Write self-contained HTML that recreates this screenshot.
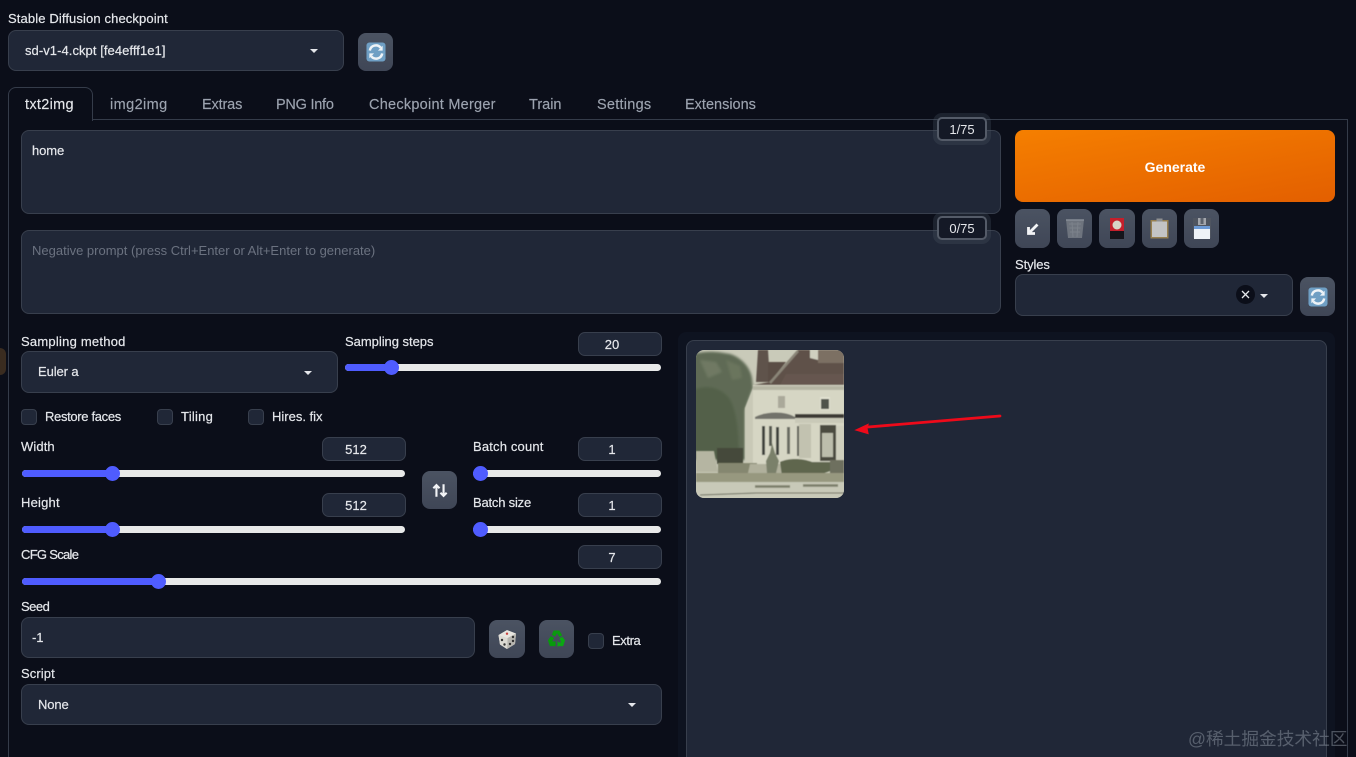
<!DOCTYPE html>
<html lang="en">
<head>
<meta charset="utf-8">
<title>Stable Diffusion</title>
<style>
*{box-sizing:border-box}
html,body{margin:0;padding:0;width:1356px;height:757px;overflow:hidden;background:#0b0e19}
#w{position:relative;width:1356px;height:757px;overflow:hidden;background:#0b0e19;font-family:"Liberation Sans","Noto Sans CJK SC",sans-serif;font-size:13px;color:#e5e7eb}
.a{position:absolute}
.t{position:absolute;white-space:nowrap;line-height:18px;height:18px;color:#e5e7eb;letter-spacing:-.1px;font-size:13px;-webkit-text-stroke:.2px currentColor}
.box{position:absolute;background:#202737;border:1px solid #383f4d;border-radius:8px}
.num{position:absolute;background:#202737;border:1px solid #383f4d;border-radius:7px;width:84px;height:24px;line-height:24px;text-align:center;padding-right:16px;font-size:13px;color:#e5e7eb;-webkit-text-stroke:.2px currentColor}
.btn{position:absolute;background:linear-gradient(#4b5362,#3f4656);border-radius:8px;display:flex;align-items:center;justify-content:center}
.cb{position:absolute;width:16px;height:16px;background:#202737;border:1px solid #383f4d;border-radius:4px}
.caret{position:absolute;width:0;height:0;border-left:4px solid transparent;border-right:4px solid transparent;border-top:4px solid #e5e7eb}
.track{position:absolute;height:7.5px;border-radius:4px;background:#e8e9e9}
.fill{position:absolute;left:0;top:0;height:7.5px;border-radius:4px;background:#4f5cff}
.thumb{position:absolute;width:15px;height:15px;border-radius:50%;background:#4f5cff;top:-3.75px}
.tab{position:absolute;top:96px;color:#9ca3af;font-size:14.5px;line-height:18px;white-space:nowrap;-webkit-text-stroke:.15px currentColor}
.cnt{position:absolute;width:50px;height:24px;background:#141926;border:2px solid #545b68;border-radius:5px;box-shadow:0 0 0 4px rgba(75,85,99,.28);text-align:center;line-height:21px;font-size:13px;color:#e5e7eb}
</style>
</head>
<body>
<div id="w">
<div class="a" style="left:0;top:348px;width:6px;height:27px;background:#3a2c20;border-radius:0 6px 6px 0"></div>

<div class="t" style="left:8px;top:10px;letter-spacing:.12px">Stable Diffusion checkpoint</div>
<div class="box" style="left:8px;top:30px;width:336px;height:41px"></div>
<div class="t" style="left:25px;top:42px;letter-spacing:.06px">sd-v1-4.ckpt [fe4efff1e1]</div>
<div class="caret" style="left:310px;top:49px"></div>
<div class="btn" style="left:358px;top:33px;width:35px;height:38px">
<svg width="20" height="20" viewBox="0 0 21 21"><rect width="20" height="20" x=".5" y=".5" rx="3" fill="#6f9fc4"/><path d="M4 9a6.5 6.5 0 0 1 11.5-3" fill="none" stroke="#eef3f7" stroke-width="2.6"/><path d="M17 12a6.5 6.5 0 0 1-11.5 3" fill="none" stroke="#eef3f7" stroke-width="2.6"/><path d="M17.5 4v5H12.500zM3.500 17v-5H8.500z" fill="#eef3f7"/></svg>
</div>

<!-- tabs -->
<div class="a" style="left:8px;top:119px;width:1340px;height:660px;border:1px solid #353c4a"></div>
<div class="a" style="left:8px;top:87px;width:85px;height:34px;background:#0b0e19;border:1px solid #353c4a;border-bottom:none;border-radius:8px 8px 0 0"></div>
<div class="tab" style="left:25px;color:#e5e7eb;letter-spacing:.3px">txt2img</div>
<div class="tab" style="left:110px;letter-spacing:.4px">img2img</div>
<div class="tab" style="left:202px;letter-spacing:-.15px">Extras</div>
<div class="tab" style="left:276px;letter-spacing:-.25px">PNG Info</div>
<div class="tab" style="left:369px;letter-spacing:.25px">Checkpoint Merger</div>
<div class="tab" style="left:529px">Train</div>
<div class="tab" style="left:597px;letter-spacing:.25px">Settings</div>
<div class="tab" style="left:685px">Extensions</div>

<!-- prompts -->
<div class="box" style="left:21px;top:130px;width:980px;height:84px"></div>
<div class="t" style="left:32px;top:142px">home</div>
<div class="cnt" style="left:937px;top:117px">1/75</div>
<div class="box" style="left:21px;top:230px;width:980px;height:84px"></div>
<div class="t" style="left:32px;top:242px;color:#6b7280;letter-spacing:0;-webkit-text-stroke:0">Negative prompt (press Ctrl+Enter or Alt+Enter to generate)</div>
<div class="cnt" style="left:937px;top:216px">0/75</div>

<!-- generate -->
<div class="a" style="left:1015px;top:130px;width:320px;height:72px;border-radius:8px;background:linear-gradient(170deg,#f57f00,#e35f00);color:#fff;font-weight:bold;font-size:14px;line-height:75px;text-align:center">Generate</div>
<div class="btn" style="left:1015px;top:209px;width:35px;height:39px">
<svg width="16" height="16" viewBox="0 0 16 16"><path d="M12.500 3.500 5 11M3.500 6v6.500H10" fill="none" stroke="#f3f4f6" stroke-width="2.800"/></svg>
</div>
<div class="btn" style="left:1057px;top:209px;width:35px;height:39px">
<svg width="20" height="21" viewBox="0 0 20 21"><path d="M1 1.500h18l-2 18.500H3z" fill="#6e747e"/><path d="M1 2h18" stroke="#868c95" stroke-width="1.500"/><path d="M4 6h12M4.500 10h11M5 14h10M7 4l1 15M13 4l-1 15" stroke="#7c828b" stroke-width="1"/></svg>
</div>
<div class="btn" style="left:1099px;top:209px;width:36px;height:39px">
<svg width="14" height="21" viewBox="0 0 14 21"><rect width="14" height="13" fill="#c41f2b"/><rect width="14" height="8" y="13" fill="#15151b"/><circle cx="7" cy="7" r="4.500" fill="#d8d3c6"/></svg>
</div>
<div class="btn" style="left:1142px;top:209px;width:35px;height:39px">
<svg width="19" height="21" viewBox="0 0 19 21"><rect width="18" height="18.500" x=".5" y="2" fill="#97804f"/><rect width="15" height="15.500" x="2" y="3.500" fill="#c3c4c4"/><rect width="6" height="3" x="6.500" y=".5" fill="#8e8f90"/></svg>
</div>
<div class="btn" style="left:1184px;top:209px;width:35px;height:39px">
<svg width="20" height="21" viewBox="0 0 20 21"><rect width="18" height="20" x="1" fill="#4f5560"/><rect width="8" height="7" x="6" fill="#a3a6ac"/><rect width="3" height="6" x="8.500" fill="#5c626c"/><rect width="16" height="13" x="2" y="8" fill="#eef2f7"/><rect width="16" height="3" x="2" y="8" fill="#6c9ad6"/></svg>
</div>
<div class="t" style="left:1015px;top:256px">Styles</div>
<div class="box" style="left:1015px;top:274px;width:278px;height:42px"></div>
<div class="a" style="left:1236px;top:285px;width:19px;height:19px;border-radius:50%;background:#0b0e19"></div>
<svg class="a" style="left:1241px;top:290px" width="9" height="9" viewBox="0 0 9 9"><path d="M1 1l7 7M8 1 1 8" stroke="#e5e7eb" stroke-width="1.300"/></svg>
<div class="caret" style="left:1260px;top:294px"></div>
<div class="btn" style="left:1300px;top:277px;width:35px;height:39px">
<svg width="20" height="20" viewBox="0 0 21 21"><rect width="20" height="20" x=".5" y=".5" rx="3" fill="#6f9fc4"/><path d="M4 9a6.500 6.500 0 0 1 11.500-3" fill="none" stroke="#eef3f7" stroke-width="2.600"/><path d="M17 12a6.500 6.500 0 0 1-11.500 3" fill="none" stroke="#eef3f7" stroke-width="2.600"/><path d="M17.500 4v5H12.500zM3.500 17v-5H8.500z" fill="#eef3f7"/></svg>
</div>

<!-- sampling -->
<div class="t" style="left:21px;top:333px;letter-spacing:.23px">Sampling method</div>
<div class="box" style="left:21px;top:351px;width:317px;height:42px"></div>
<div class="t" style="left:38px;top:363px">Euler a</div>
<div class="caret" style="left:304px;top:371px"></div>
<div class="t" style="left:345px;top:333px;letter-spacing:-.03px">Sampling steps</div>
<div class="num" style="left:578px;top:332px">20</div>
<div class="track" style="left:345px;top:363.500px;width:316px"><div class="fill" style="width:46px"></div><div class="thumb" style="left:39px"></div></div>

<div class="cb" style="left:21px;top:409px"></div>
<div class="t" style="left:45px;top:408px;letter-spacing:-.33px">Restore faces</div>
<div class="cb" style="left:157px;top:409px"></div>
<div class="t" style="left:181px;top:408px;letter-spacing:.25px">Tiling</div>
<div class="cb" style="left:248px;top:409px"></div>
<div class="t" style="left:272px;top:408px;letter-spacing:0">Hires. fix</div>

<div class="t" style="left:21px;top:438px;letter-spacing:.1px">Width</div>
<div class="num" style="left:322px;top:437px">512</div>
<div class="track" style="left:22px;top:469.500px;width:383px"><div class="fill" style="width:90px"></div><div class="thumb" style="left:83px"></div></div>
<div class="t" style="left:21px;top:494px;letter-spacing:.2px">Height</div>
<div class="num" style="left:322px;top:493px">512</div>
<div class="track" style="left:22px;top:525.500px;width:383px"><div class="fill" style="width:90px"></div><div class="thumb" style="left:83px"></div></div>

<div class="btn" style="left:422px;top:471px;width:35px;height:38px">
<svg width="16" height="15" viewBox="0 0 18 16"><path d="M5 15V2M1.500 5.500 5 2l3.500 3.500M13 1v13M9.500 10.500 13 14l3.500-3.500" fill="none" stroke="#f3f4f6" stroke-width="2.400"/></svg>
</div>

<div class="t" style="left:473px;top:438px;letter-spacing:.17px">Batch count</div>
<div class="num" style="left:578px;top:437px">1</div>
<div class="track" style="left:473px;top:469.500px;width:188px"><div class="fill" style="width:10px"></div><div class="thumb" style="left:0"></div></div>
<div class="t" style="left:473px;top:494px;letter-spacing:-.2px">Batch size</div>
<div class="num" style="left:578px;top:493px">1</div>
<div class="track" style="left:473px;top:525.500px;width:188px"><div class="fill" style="width:10px"></div><div class="thumb" style="left:0"></div></div>

<div class="t" style="left:21px;top:546px;letter-spacing:-.7px">CFG Scale</div>
<div class="num" style="left:578px;top:545px">7</div>
<div class="track" style="left:22px;top:577.500px;width:639px"><div class="fill" style="width:136px"></div><div class="thumb" style="left:129px"></div></div>

<div class="t" style="left:21px;top:598px;letter-spacing:-.5px">Seed</div>
<div class="box" style="left:21px;top:617px;width:454px;height:41px"></div>
<div class="t" style="left:32px;top:629px">-1</div>
<div class="btn" style="left:489px;top:620px;width:36px;height:38px">
<svg width="21" height="21" viewBox="0 0 21 21"><path d="M10 1 19 4.500 18 15l-8 5-7-4.500L1.500 6z" fill="#e8e6e0"/><path d="M10 20 10.500 9 19 4.500 18 15z" fill="#b8b6b0"/><path d="M1.500 6 10.500 9 10 20 3 15.500z" fill="#dcdad3"/><circle cx="10" cy="4.700" r="1.200" fill="#c9433f"/><circle cx="5" cy="11" r="1.200" fill="#333"/><circle cx="7.500" cy="15.500" r="1.200" fill="#333"/><circle cx="13" cy="15" r="1.200" fill="#333"/><circle cx="16" cy="8" r="1.200" fill="#333"/><circle cx="16" cy="12" r="1.200" fill="#333"/></svg>
</div>
<div class="btn" style="left:539px;top:620px;width:35px;height:38px">
<svg width="19" height="20" viewBox="0 0 20 21"><path d="M7 1.500h6l3 5-3 2-2.500-4-2 3.500-3.500-2z" fill="#0a9a0f"/><path d="M1 12l3-4.500 3.500 2-2 3.500h3.500v5H3z" fill="#079a0c"/><path d="M19 12l-3-4-3 2 2 4h-3l-1-2v7l1-1h5z" fill="#0aa812"/></svg>
</div>
<div class="cb" style="left:588px;top:633px"></div>
<div class="t" style="left:612px;top:632px;letter-spacing:-.4px">Extra</div>

<div class="t" style="left:21px;top:665px;letter-spacing:.1px">Script</div>
<div class="box" style="left:21px;top:684px;width:641px;height:41px"></div>
<div class="t" style="left:38px;top:696px">None</div>
<div class="caret" style="left:628px;top:703px"></div>

<!-- gallery -->
<div class="a" style="left:678px;top:332px;width:657px;height:440px;background:#0e1320;border-radius:8px"></div>
<div class="box" style="left:686px;top:340px;width:641px;height:440px"></div>
<svg class="a" style="left:696px;top:350px;border-radius:8px" width="148" height="148" viewBox="0 0 148 148">
<defs>
<filter id="b" x="-5%" y="-5%" width="110%" height="110%"><feGaussianBlur stdDeviation=".5"/></filter>
<filter id="c" x="-10%" y="-10%" width="120%" height="120%"><feGaussianBlur stdDeviation="1.200"/></filter>
</defs>
<rect width="148" height="148" fill="#c9cab9"/>
<g filter="url(#c)">
<path d="M-3 4C12 0 24 2 34 4c10 3 20 12 22 24l1 10-8 22v50H-3z" fill="#5f6b55"/>
<path d="M-3 40c14-6 28-2 36 8 8 12 10 36 10 62H-3z" fill="#536149"/>
<path d="M4 10l16 2 6 10-14 6z" fill="#6f7963"/>
<path d="M30 10l14 6 2 12-10 2z" fill="#6a745d"/>
</g>
<g filter="url(#b)">
<path d="M21 98h26v16H21z" fill="#454a3b"/>
<path d="M62 0h10l2 32H60z" fill="#5e534b"/>
<path d="M72 12h18L74 32h-2z" fill="#5a4d45"/>
<path d="M74 32 102 0h46v35H57z" fill="#5f5148"/>
<path d="M114 0h8v10l-8-2z" fill="#cfd0bf"/>
<path d="M122 0h26v13h-26z" fill="#7b7063"/>
<path d="M74 33 102 1" stroke="#8a8578" stroke-width="2.500"/>
<path d="M90 24h58v11H84z" fill="#66574f"/>
<path d="M57 35h91v80H57z" fill="#d6d6c4"/>
<path d="M49 58l8-20v77h-8z" fill="#c9c9b7"/>
<path d="M57 36h91v4H57z" fill="#b6b6a4"/>
<rect x="82" y="46" width="7" height="12" fill="#aaa99a"/>
<rect x="124" y="47" width="10" height="13" fill="#e2e2d2"/>
<rect x="125" y="49" width="8" height="10" fill="#50524b"/>
<path d="M59 67c12-6 30-6 40 0v2H59z" fill="#72726a"/>
<path d="M99 64h49v4H99z" fill="#3c3b35"/>
<path d="M99 68h49v5H99z" fill="#c9c9b8"/>
<rect x="66" y="76" width="3" height="29" fill="#3f423d"/>
<rect x="73" y="76" width="3" height="20" fill="#55584f"/>
<rect x="80" y="77" width="3" height="28" fill="#3f423d"/>
<rect x="91" y="77" width="3" height="27" fill="#6a6c62"/>
<rect x="101" y="76" width="2" height="30" fill="#5f6056"/>
<rect x="103" y="74" width="12" height="34" fill="#c2c2b0"/>
<rect x="124" y="75" width="16" height="36" fill="#4c4b40"/>
<rect x="126" y="83" width="11" height="24" fill="#bcbdac"/>
<rect x="140" y="76" width="8" height="34" fill="#cfcfbe"/>
<path d="M0 101h18l4 21H0z" fill="#b5b5a2"/>
<path d="M22 113h39v10H22z" fill="#85876f"/>
<path d="M54 114h32l4 9H52z" fill="#b0b09c"/>
<path d="M84 112c8-4 22-4 32 0h18v9l-14 5H86z" fill="#5f664d"/>
<path d="M134 110h14v14h-14z" fill="#6e705f"/>
<path d="M76 93l3 10 4 8-3 12h-9l-1-12 4-8z" fill="#7a806b"/>
<path d="M0 123h148v10H0z" fill="#97987f"/>
<path d="M0 132h148v16H0z" fill="#c8c9b8"/>
<path d="M59 136.500h35M107 135.500h35" stroke="#7b7e6a" stroke-width="2.500"/>
<path d="M4 145l56-2h88" stroke="#6a6c5d" stroke-width="1" fill="none"/>
</g>
</svg>
<svg class="a" style="left:850px;top:408px" width="156" height="30" viewBox="0 0 156 30"><path d="M150 8 18 19" stroke="#ee0a1a" stroke-width="2.800" stroke-linecap="round"/><path d="M6 22 18 16.500l-1 4 1 5z" fill="#ee0a1a" stroke="#ee0a1a" stroke-width="1.200"/></svg>

<div class="a" style="left:1188px;top:728px;white-space:nowrap;font-size:17.700px;line-height:22px;color:rgba(156,163,175,.45)">@稀土掘金技术社区</div>
</div>
</body>
</html>
